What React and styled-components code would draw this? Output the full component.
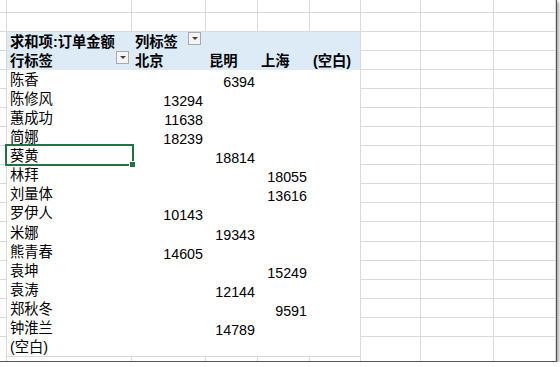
import React from "react";
import styled, { createGlobalStyle } from "styled-components";

const GlobalStyle = createGlobalStyle`
  html, body { margin: 0; padding: 0; background: #fff; }
  body { font-family: "Liberation Sans", "Noto Sans CJK SC", sans-serif; }
`;

const GRID = "#d9d9d9";

const Window = styled.div`
  width: 556px;
  height: 361px;
  overflow: hidden;
  background: #fff;
  border-right: 1px solid #555;
  border-bottom: 1px solid #555;
  box-shadow: 2px 2px 3px rgba(0, 0, 0, 0.35);
  font-size: 14.3px;
  color: #000;
`;

const Row = styled.div`
  display: grid;
  grid-template-columns: 7px 125px 74px 52px 52px 51px 60px 73px 62px;
  height: ${(p) => p.$h ?? 19}px;
`;

const Cell = styled.div`
  box-sizing: border-box;
  position: relative;
  display: flex;
  align-items: flex-end;
  justify-content: ${(p) => (p.$num ? "flex-end" : "flex-start")};
  min-width: 0;
  white-space: nowrap;
  padding: 5px 3px 0 3px;
  line-height: 14px;
  border-right: ${(p) => (p.$vr ? `1px solid ${GRID}` : "none")};
  border-bottom: ${(p) => (p.$hr ? `1px solid ${GRID}` : "none")};
  background: ${(p) => (p.$head ? "#DDEBF7" : "#fff")};
  font-weight: ${(p) => (p.$head ? 700 : 400)};
`;

const Text = styled.span`
  position: relative;
  top: -2px;
`;

const GridCell = styled.div`
  box-sizing: border-box;
  border-right: 1px solid ${GRID};
  border-bottom: 1px solid ${GRID};
  background: #fff;
`;

const DropBtn = styled.span`
  box-sizing: border-box;
  width: 13px;
  height: 13px;
  margin-left: auto;
  margin-right: ${(p) => p.$mr ?? 0}px;
  align-self: flex-start;
  margin-top: -5px;
  border: 1px solid #a9a9a9;
  background: #f4f4f4;
  display: flex;
  align-items: center;
  justify-content: center;
  &::after {
    content: "";
    border-left: 3px solid transparent;
    border-right: 3px solid transparent;
    border-top: 3px solid #404040;
  }
`;

const Selection = styled.div`
  position: absolute;
  left: -2px;
  right: -2px;
  top: -2px;
  bottom: -1px;
  border: 2px solid #217346;
  pointer-events: none;
  z-index: 2;
  &::after {
    content: "";
    position: absolute;
    right: -4px;
    bottom: -4px;
    width: 5px;
    height: 5px;
    background: #217346;
    border: 1px solid #fff;
  }
`;

const RIGHT_COLS = 3;
const ALL_COLS = 9;

const rows = [
  ["陈香", 1, 6394],
  ["陈修风", 0, 13294],
  ["蕙成功", 0, 11638],
  ["简娜", 0, 18239],
  ["葵黄", 1, 18814],
  ["林拜", 2, 18055],
  ["刘量体", 2, 13616],
  ["罗伊人", 0, 10143],
  ["米娜", 1, 19343],
  ["熊青春", 0, 14605],
  ["袁坤", 2, 15249],
  ["袁涛", 1, 12144],
  ["郑秋冬", 2, 9591],
  ["钟淮兰", 1, 14789],
  ["(空白)", -1, null],
];

function GridRow({ h }) {
  return (
    <Row $h={h}>
      {Array.from({ length: ALL_COLS }, (_, i) => (
        <GridCell key={i} />
      ))}
    </Row>
  );
}

function RightGrid() {
  return Array.from({ length: RIGHT_COLS }, (_, i) => <GridCell key={"r" + i} />);
}

export default function App() {
  return (
    <>
      <GlobalStyle />
      <Window>
        <GridRow h={13} />
        <GridRow h={19} />
        <Row>
          <GridCell />
          <Cell $head>
            <Text>求和项:订单金额</Text>
          </Cell>
          <Cell $head>
            <Text>列标签</Text>
            <DropBtn $mr={2} />
          </Cell>
          <Cell $head />
          <Cell $head />
          <Cell $head $vr />
          <RightGrid />
        </Row>
        <Row>
          <GridCell />
          <Cell $head>
            <Text>行标签</Text>
            <DropBtn />
          </Cell>
          <Cell $head>
            <Text>北京</Text>
          </Cell>
          <Cell $head>
            <Text>昆明</Text>
          </Cell>
          <Cell $head>
            <Text>上海</Text>
          </Cell>
          <Cell $head $vr>
            <Text>(空白)</Text>
          </Cell>
          <RightGrid />
        </Row>
        {rows.map(([name, col, val], r) => {
          const last = r === rows.length - 1;
          return (
            <Row key={name} $h={name === "米娜" ? 20 : 19}>
              <GridCell />
              <Cell $hr={last}>
                <Text>{name}</Text>
                {name === "葵黄" && <Selection />}
              </Cell>
              {[0, 1, 2, 3].map((c) => (
                <Cell key={c} $num $hr={last} $vr={c === 3}>
                  {c === col ? val : ""}
                </Cell>
              ))}
              <RightGrid />
            </Row>
          );
        })}
        <GridRow h={19} />
      </Window>
    </>
  );
}
